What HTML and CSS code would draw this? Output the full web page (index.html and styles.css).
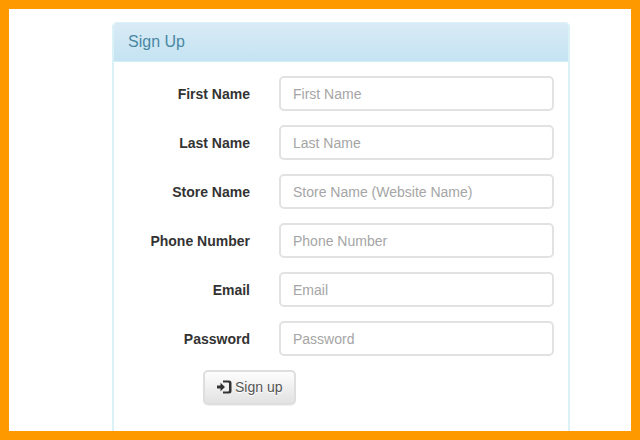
FILE: index.html
```html
<!DOCTYPE html>
<html lang="en">
<head>
<meta charset="utf-8">
<title>Sign Up</title>
<link rel="stylesheet" href="styles.css">
</head>
<body>
<main class="page">
  <section class="panel">
    <h1 class="panel-heading">Sign Up</h1>
    <form class="panel-body">
      <div class="form-group"><label for="first">First Name</label><input id="first" placeholder="First Name"></div>
      <div class="form-group"><label for="last">Last Name</label><input id="last" placeholder="Last Name"></div>
      <div class="form-group"><label for="store">Store Name</label><input id="store" placeholder="Store Name (Website Name)"></div>
      <div class="form-group"><label for="phone">Phone Number</label><input id="phone" placeholder="Phone Number"></div>
      <div class="form-group"><label for="email">Email</label><input id="email" placeholder="Email"></div>
      <div class="form-group"><label for="password">Password</label><input id="password" type="password" placeholder="Password"></div>
      <button class="btn" type="button">
        <svg class="icon" viewBox="0 0 16 14" aria-hidden="true"><path d="M1 5.500h3.500V2.800L9 7l-4.500 4.200V8.500H1z"/><path d="M7 .5h6q2.500 0 2.500 2.500v8q0 2.500-2.500 2.500H7v-2h5q1 0 1-1v-7q0-1-1-1H7z"/></svg>
        <span>Sign up</span>
      </button>
    </form>
  </section>
</main>
</body>
</html>
```

FILE: styles.css
```css
* { box-sizing: border-box; }
body {
  margin: 0;
  font: 14px/20px "Liberation Sans", Arial, sans-serif;
  color: #333;
}
.page {
  height: 440px;
  border: 9px solid #ff9900;
  background: #fff;
  padding: 13px 61px 0 103px;
  overflow: hidden;
}
.panel {
  height: 440px;
  border: 2px solid #daf1f7;
  border-top-width: 1px;
  border-radius: 5px;
}
.panel-heading {
  margin: 0;
  height: 39px;
  padding: 9px 14px;
  border-bottom: 1px solid #d3eef6;
  border-radius: 3px 3px 0 0;
  background: linear-gradient(#d9ebf6, #c4e3f2);
  color: #4a87a3;
  font-size: 16px;
  font-weight: 400;
}
.panel-body { padding: 14px; }
.form-group {
  display: grid;
  grid-template-columns: 122px 275px;
  column-gap: 29px;
  align-items: center;
  margin-bottom: 14px;
}
label { font-weight: 700; text-align: right; }
input {
  width: 100%;
  height: 35px;
  padding: 6px 12px 5px;
  border: 2px solid #e2e2e2;
  border-radius: 5px;
  font: inherit;
}
input::placeholder { color: #a5a5a5; opacity: 1; }
.btn {
  display: flex;
  align-items: center;
  gap: 3px;
  width: 93px;
  height: 35px;
  margin-left: 75px;
  padding: 0 11px 1px;
  border: 2px solid #dedede;
  border-radius: 5px;
  background: linear-gradient(#fff, #e0e0e0) border-box;
  box-shadow: 0 1px 1px rgba(0, 0, 0, .06);
  color: #555;
  font: inherit;
  text-shadow: 0 1px 0 #fff;
  white-space: nowrap;
}
.icon { width: 16px; height: 14px; flex: none; fill: #333; }
```
